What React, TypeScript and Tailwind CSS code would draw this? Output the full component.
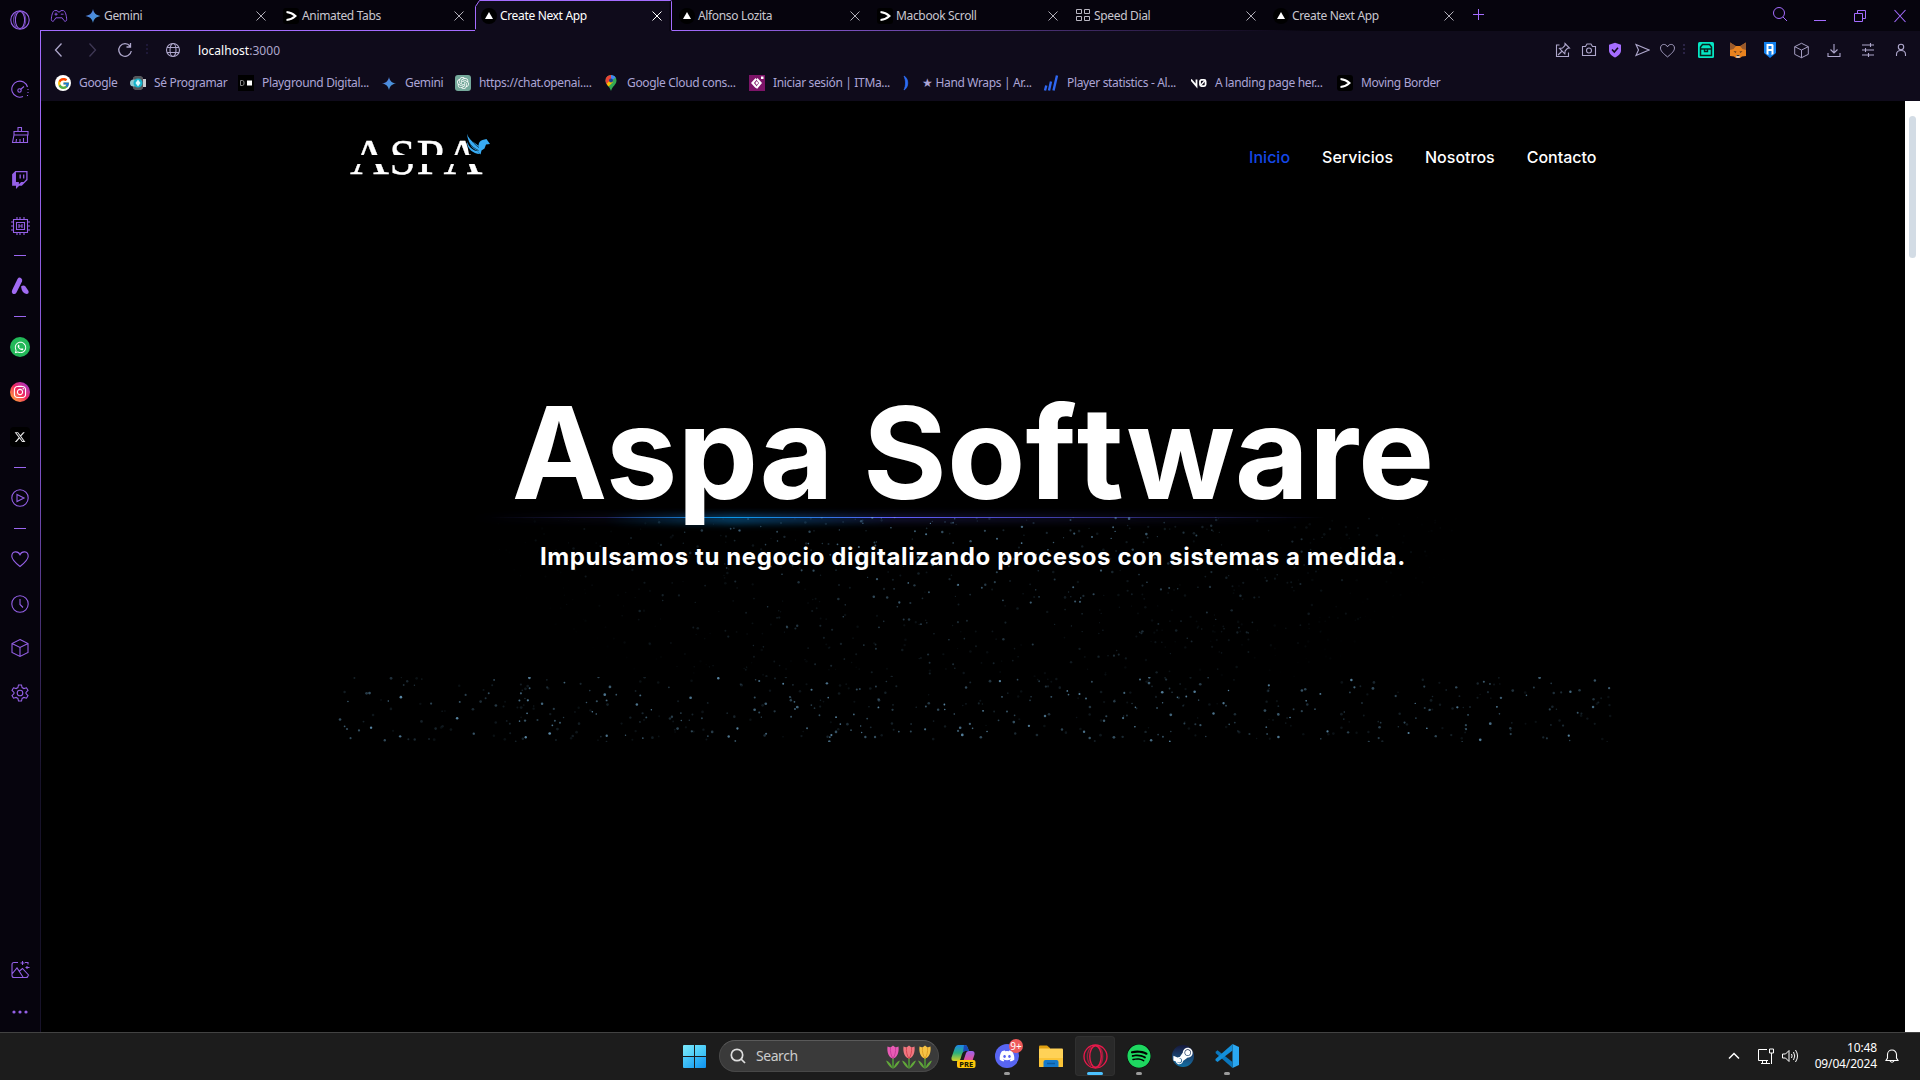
import type { ReactNode } from 'react';
import { FaWhatsapp, FaInstagram, FaXTwitter, FaSpotify, FaSteamSymbol, FaDiscord } from 'react-icons/fa6';
import { BsTwitch } from 'react-icons/bs';
import { SiOpenai } from 'react-icons/si';
import { FcGoogle } from 'react-icons/fc';

type IconProps = { className?: string };

/* ---------- shared helpers ---------- */

function Line({ children, className = '', box = 20 }: { children: ReactNode; className?: string; box?: number }) {
  return (
    <svg viewBox={`0 0 ${box} ${box}`} fill="none" stroke="currentColor" strokeWidth="1.1" className={className}>
      {children}
    </svg>
  );
}

function OperaRing({ className = '' }: IconProps) {
  return (
    <Line className={className}>
      <circle cx="10" cy="10" r="9.2" />
      <ellipse cx="10" cy="10" rx="4.6" ry="8.6" />
      <path d="M12 1.500c5 3.500 5 13.500 0 17M6.500 2.500c-4 4-4 11 0 15" strokeOpacity=".6" />
    </Line>
  );
}

function Cube({ className = '' }: IconProps) {
  return (
    <Line className={className}>
      <path d="M10 1.500l8 4v9l-8 4-8-4v-9zM2 5.500l8 4 8-4M10 9.500v9" />
    </Line>
  );
}

function Heart({ className = '' }: IconProps) {
  return (
    <Line className={className}>
      <path d="M10 17.500C5 13.500 1.800 10.600 1.800 7.200c0-5.400 6.400-5.600 8.200-1.500 1.800-4.100 8.200-3.900 8.200 1.500 0 3.400-3.200 6.300-8.200 10.300z" />
    </Line>
  );
}

function Cross({ className = '' }: IconProps) {
  return (
    <svg viewBox="0 0 10 10" fill="none" stroke="currentColor" className={className}>
      <path d="M0.500 0.500l9 9M9.500 0.500l-9 9" />
    </svg>
  );
}

/* ---------- favicons ---------- */

function Spark({ className = '' }: IconProps) {
  return (
    <svg viewBox="0 0 16 16" className={className}>
      <defs>
        <linearGradient id="spark" x1="0" y1="0" x2="1" y2="1">
          <stop offset="0" stopColor="#5b6fd0" />
          <stop offset=".5" stopColor="#4a90e0" />
          <stop offset="1" stopColor="#4a8fc0" />
        </linearGradient>
      </defs>
      <path d="M8 1c.9 4.200 2.800 6.100 7.500 7-4.700.9-6.600 2.800-7.500 7-.9-4.200-2.800-6.100-7.500-7 4.700-.9 6.600-2.800 7.500-7z" fill="url(#spark)" />
    </svg>
  );
}

function Chevron({ className = '' }: IconProps) {
  return (
    <svg viewBox="0 0 16 16" className={className}>
      <rect width="16" height="16" rx="3" fill="#000" />
      <path d="M3.500 4c3.500.3 6.500 1.700 9 4-2.500 2.300-5.500 3.700-9 4" fill="none" stroke="#fff" strokeWidth="2" />
    </svg>
  );
}

function Triangle({ className = '' }: IconProps) {
  return (
    <svg viewBox="0 0 16 16" className={className}>
      <circle cx="8" cy="8" r="8" fill="#000" />
      <path d="M8 4l4 7H4z" fill="#fff" />
    </svg>
  );
}

function Dial({ className = '' }: IconProps) {
  return (
    <svg viewBox="0 0 16 16" fill="none" stroke="#b9b7c2" className={className}>
      <path d="M1.500 1.500h5v4h-5zM9.500 1.500h5v4h-5zM1.500 8.500h5v4h-5zM9.500 8.500h5v4h-5z" />
    </svg>
  );
}

/* ---------- tab strip ---------- */

const TABS: { title: string; Icon: (p: IconProps) => ReactNode; active?: boolean }[] = [
  { title: 'Gemini', Icon: Spark },
  { title: 'Animated Tabs', Icon: Chevron },
  { title: 'Create Next App', Icon: Triangle, active: true },
  { title: 'Alfonso Lozita', Icon: Triangle },
  { title: 'Macbook Scroll', Icon: Chevron },
  { title: 'Speed Dial', Icon: Dial },
  { title: 'Create Next App', Icon: Triangle },
];

function TabStrip() {
  return (
    <div className="relative flex h-[31px] items-center bg-[#06040d]">
      <div className="absolute bottom-0 left-0 h-px w-[435px] bg-[#a46cff]" />
      <div className="absolute bottom-0 left-[632px] h-px w-[640px] bg-linear-to-r from-[#a46cff] to-transparent" />
      <div className="flex w-[39px] justify-center">
        <Line className="mr-px h-[18px] w-[18px] text-[#8b56e0]">
          <path d="M5 4h3l1 1.500h2L12 4h3c2 .5 3.500 6 3.500 10 0 2-2 2.500-3 1l-2-3h-7l-2 3c-1 1.500-3 1-3-1C1.500 10 3 4.500 5 4zM5 8h3.500M6.700 6.300v3.400M12 8h3" />
        </Line>
      </div>
      {TABS.map(({ title, Icon, active }, i) => (
        <div key={i} className="relative flex h-full w-[198px] shrink-0 items-center pl-[6px]">
          {active && (
            <svg viewBox="0 0 198 31" className="absolute inset-0 h-full w-full">
              <path d="M-2 31V30.500Q-0.500 30.500 -0.500 29V6.500L4.500 0.500H193.500Q194.500 0.500 194.500 1.500V31z" fill="#0f0b1b" />
              <path d="M-3 30.500H-1.500L0.500 29V6.500L4.500 0.500H195.500Q196.500 0.500 196.500 1.500V30.500" fill="none" stroke="#a46cff" />
            </svg>
          )}
          <Icon className="relative h-4 w-4 shrink-0" />
          <span
            className={`relative ml-[3px] w-[150px] text-[12px] leading-4 tracking-[-0.34px] ${active ? 'text-white' : 'text-[#c9c7cf]'}`}
          >
            {title}
          </span>
          <Cross className={`relative ml-[1.5px] h-[10px] w-[10px] ${active ? 'text-white' : 'text-[#b0aeb8]'}`} />
        </div>
      ))}
      <svg viewBox="0 0 12 12" className="mb-[4px] ml-[7px] h-3 w-3" stroke="#a46cff">
        <path d="M6.500 1v11M1 6.500h11" />
      </svg>
      <div className="ml-auto flex items-center gap-[24px] pr-3 text-[#a46cff]">
        <svg viewBox="0 0 16 16" fill="none" stroke="currentColor" className="-mt-1 h-4 w-4">
          <circle cx="7" cy="7" r="5.500" />
          <path d="M11 11l4 4" />
        </svg>
        <svg viewBox="0 0 16 16" fill="none" stroke="currentColor" className="h-4 w-4">
          <path d="M2 12.500h12" />
        </svg>
        <svg viewBox="0 0 16 16" fill="none" stroke="currentColor" className="h-4 w-4">
          <path d="M2.500 5.500h8v8h-8zM5.500 5V2.500h8v8H11" />
        </svg>
        <svg viewBox="0 0 16 16" fill="none" stroke="currentColor" strokeWidth="1.100" className="h-4 w-4">
          <path d="M2.500 2l11 12M13.500 2l-11 12" />
        </svg>
      </div>
    </div>
  );
}

/* ---------- address bar ---------- */

function Dots() {
  return (
    <svg viewBox="0 0 3 12" className="h-3 w-[3px]" fill="currentColor">
      <path d="M0 0h2v2H0zM0 4h2v2H0zM0 8h2v2H0z" />
    </svg>
  );
}

function AddressBar() {
  return (
    <div className="flex h-[38px] items-center text-[#aea7cc]">
      <Line className="ml-[11px] h-4 w-4" box={16}>
        <path d="M10.500 1.500L4.500 8l6 6.500" strokeWidth="1.300" />
      </Line>
      <Line className="ml-[17px] h-4 w-4 text-[#3f3855]" box={16}>
        <path d="M5.500 1.500l6 6.500-6 6.500" strokeWidth="1.300" />
      </Line>
      <Line className="ml-[17px] h-4 w-4" box={16}>
        <path d="M13 4a6.300 6.300 0 1 0 1.300 5M13.500 1v4h-4" strokeWidth="1.300" />
      </Line>
      <span className="ml-[13px] w-[3px] text-[#1e1838]">
        <Dots />
      </span>
      <Line className="ml-[16px] h-4 w-4" box={16}>
        <circle cx="8" cy="8" r="6.500" />
        <ellipse cx="8" cy="8" rx="3" ry="6.500" />
        <path d="M2 5.500h12M2 10.500h12" />
      </Line>
      <span className="mt-px ml-[17px] text-[12px] tracking-[0.05px]">
        <span className="text-white">localhost</span>:3000
      </span>
      <div className="ml-auto flex items-center">
        <Line className="h-4 w-4" box={16}>
          <path d="M4.500 3H1.500v11.500h12V10.500" />
          <path d="M10 1.500l4.500 4.500-2 .3-2.300 2.500-.4 3L4.500 6.500l3-.4L10 3.500zM7.200 9L3 13" />
        </Line>
        <Line className="ml-[10px] h-4 w-4" box={16}>
          <path d="M1.500 4.500h3l1.500-2.500h4l1.500 2.500h3v9h-13z" />
          <circle cx="8" cy="8.500" r="2.500" />
        </Line>
        <svg viewBox="0 0 16 16" className="ml-[10px] h-4 w-4">
          <path d="M8 .8l6 2v5.700c0 3.500-3 5.500-6 7-3-1.500-6-3.500-6-7V2.800z" fill="#a56dff" />
          <path d="M5 7.500L7.300 10 11 5.800" fill="none" stroke="#0f0b1b" strokeWidth="1.600" />
        </svg>
        <Line className="ml-[11px] h-4 w-4" box={16}>
          <path d="M2 2.500L15 8 2 13.500 4.500 8z" />
        </Line>
        <Heart className="ml-[9px] h-[17px] w-[17px]" />
        <span className="ml-[7px] w-[3px] text-[#2a2345]">
          <Dots />
        </span>
        <svg viewBox="0 0 16 16" className="ml-[12px] h-4 w-4">
          <rect width="16" height="16" rx="1.500" fill="#05e6c4" />
          <path d="M2.500 13.500V5l2-2.500h7l2 2.500v8.500z" fill="#05e6c4" stroke="#08231f" strokeWidth="1.500" />
          <path d="M2.500 7h11M6.500 7v2.500h3V7" fill="none" stroke="#08231f" strokeWidth="1.400" />
        </svg>
        <svg viewBox="0 0 16 16" className="ml-[16px] h-4 w-4">
          <path d="M0 .5l5.500 3.500h5L16 .5V14l-4 .5-2 1.500H6l-2-1.500-4-.5z" fill="#e8821e" />
          <path d="M0 .5L6 4 3.500 7 0 8zM16 .5L10 4l2.500 3 3.500 1z" fill="#9a5a2c" />
          <path d="M3.500 9l3 .5-1 1.500zM12.500 9l-3 .5 1 1.500z" fill="#5d3a20" />
          <path d="M6 13h4l-.5 3h-3z" fill="#d9c7b4" />
          <path d="M6.500 13h3v1h-3z" fill="#333" />
        </svg>
        <svg viewBox="0 0 16 16" className="ml-[16px] h-4 w-4">
          <path d="M2 0h12v11l-6 5-6-5z" fill="#1180ee" />
          <path d="M4.500 2h6l1 1v9l-2 1V9h-3v4l-2-1z" fill="#fff" />
          <path d="M6.500 4h3v3h-3z" fill="#1180ee" />
        </svg>
        <Cube className="ml-[15px] h-[17px] w-[17px]" />
        <Line className="ml-[16px] h-4 w-4" box={16}>
          <path d="M8 2v8.500M4.500 7.500L8 11l3.500-3.500M2 11v3.500h12V11" />
        </Line>
        <Line className="ml-[18px] h-4 w-4" box={16}>
          <path d="M2 3h12M2 8h12M2 13h12M10.500 1v4M5.500 6v4M8.500 11v4" />
        </Line>
        <Line className="mr-[11px] ml-[17px] h-4 w-4" box={16}>
          <circle cx="8" cy="5" r="2.700" />
          <path d="M3.500 14v-1.500C3.500 10 5.500 8.500 8 8.500s4.500 1.500 4.500 4V14" />
        </Line>
      </div>
    </div>
  );
}

/* ---------- bookmarks ---------- */

const BOOKMARKS: { label: string; width: string; icon: ReactNode }[] = [
  {
    label: 'Google',
    width: 'w-[75px]',
    icon: (
      <span className="flex h-4 w-4 items-center justify-center rounded-full bg-white">
        <FcGoogle className="h-[13px] w-[13px]" />
      </span>
    ),
  },
  {
    label: 'Sé Programar',
    width: 'w-[108px]',
    icon: (
      <svg viewBox="0 0 16 16" className="h-4 w-4">
        <path d="M3 2.500l2-1.500h6l2 1.500v11L11 15H5l-2-1.500z" fill="#55585c" />
        <path d="M13 4l3 0v8h-3z" fill="#c9cdd0" />
        <circle cx="3.500" cy="8" r="3.500" fill="#8fc9cf" />
        <path d="M8 3.500a4.500 4.500 0 1 1 0 9 4.500 4.500 0 1 1 0-9z" fill="#16b4cc" />
        <path d="M8 4.500L5.500 8 8 11.500 10.500 8z" fill="#d8fbff" />
      </svg>
    ),
  },
  {
    label: 'Playground Digital...',
    width: 'w-[143px]',
    icon: (
      <svg viewBox="0 0 16 16" className="h-4 w-4">
        <rect width="16" height="16" fill="#000" />
        <path d="M2.500 5.500h2l1.500 1v3l-1.500 1h-2z" fill="none" stroke="#888" />
        <rect x="9" y="5.500" width="5" height="5" fill="#fff" />
      </svg>
    ),
  },
  { label: 'Gemini', width: 'w-[74px]', icon: <Spark className="h-[15px] w-4" /> },
  {
    label: 'https://chat.openai....',
    width: 'w-[148px]',
    icon: (
      <span className="flex h-4 w-4 items-center justify-center rounded-[3px] bg-[#75a99b] text-white">
        <SiOpenai className="h-3 w-3" />
      </span>
    ),
  },
  {
    label: 'Google Cloud cons...',
    width: 'w-[146px]',
    icon: (
      <svg viewBox="0 0 16 16" className="h-4 w-4">
        <defs>
          <clipPath id="pin">
            <path d="M8 0a5.500 5.500 0 0 1 5.500 5.500C13.500 9.500 9.500 11 8 16 6.500 11 2.500 9.500 2.500 5.500A5.500 5.500 0 0 1 8 0z" />
          </clipPath>
        </defs>
        <g clipPath="url(#pin)">
          <path d="M0 0h16v16H0z" fill="#34a853" />
          <path d="M0 0h8L8 6 2 11H0z" fill="#ea4335" />
          <path d="M8 0h8L8 6z" fill="#4285f4" />
          <path d="M1 12L8 4l2 3-6 6z" fill="#fbbc04" />
        </g>
        <circle cx="8" cy="5.500" r="2" fill="#1a3f8f" />
      </svg>
    ),
  },
  {
    label: 'Iniciar sesión | ITMa...',
    width: 'w-[149px]',
    icon: (
      <svg viewBox="0 0 16 16" className="h-4 w-4">
        <rect width="16" height="16" fill="#7d1468" />
        <path d="M6.500 3L2 8l4.500 5 1.300-1.500L5 8l2.800-3.500z" fill="#fff" />
        <path d="M8.500 3L13 8l-5 6-1.300-1.700L10 8 7.200 4.500z" fill="#fff" />
        <path d="M6.200 8L7.800 6l1.600 2-1.600 2zM12 1.500h2.500V4H12z" fill="#fff" />
      </svg>
    ),
  },
  {
    label: '★ Hand Wraps | Ar...',
    width: 'w-[145px]',
    icon: (
      <svg viewBox="0 0 16 16" className="h-4 w-4">
        <path d="M6 1c5 2.500 5 11.500 0 14 2-4.500 2-9.500 0-14z" fill="#2d6df6" stroke="#2d6df6" strokeWidth=".7" />
      </svg>
    ),
  },
  {
    label: 'Player statistics - Al...',
    width: 'w-[148px]',
    icon: (
      <svg viewBox="0 0 16 16" className="h-4 w-4" stroke="#2f67f0" strokeWidth="2.400">
        <path d="M2 15.500l1.300-5M6 15.500L8 6.500M10.500 15.500L14 .5" />
      </svg>
    ),
  },
  {
    label: 'A landing page her...',
    width: 'w-[146px]',
    icon: (
      <svg viewBox="0 0 16 16" className="h-4 w-4" fill="none" stroke="#fff" strokeWidth="1.800">
        <path d="M0 4.500L5.500 11V4.500" />
        <rect x="9" y="4.900" width="5.600" height="6.200" rx="1.500" />
        <path d="M9.500 10.500l4.500-5" strokeWidth="1.200" />
      </svg>
    ),
  },
  { label: 'Moving Border', width: 'w-[120px]', icon: <Chevron className="h-4 w-4" /> },
];

function Bookmarks() {
  return (
    <div className="flex h-[32px] items-center pb-[4px] pl-[15px]">
      {BOOKMARKS.map((b) => (
        <div key={b.label} className={`flex shrink-0 items-center gap-2 ${b.width}`}>
          <span className="flex h-4 w-4 shrink-0 items-center">{b.icon}</span>
          <span className="whitespace-nowrap text-[12px] leading-4 tracking-[-0.34px] text-[#aca5d6]">{b.label}</span>
        </div>
      ))}
    </div>
  );
}

/* ---------- side bar ---------- */

function Divider({ className = '' }: IconProps) {
  return (
    <div className={`flex h-[2px] w-3 shrink-0 items-start ${className}`}>
      <div className="h-px w-full bg-[#9a66f0]" />
    </div>
  );
}

function Sidebar() {
  return (
    <aside className="flex w-10 shrink-0 flex-col items-center bg-[#06040d] pt-[10px] pb-[10px] text-[#9460e6]">
      <OperaRing className="h-5 w-5 shrink-0" />
      <Line className="mt-[50px] h-5 w-5 shrink-0">
        <path d="M13 16.500A8 8 0 1 1 17.500 7M18 9v1M18 12v1M17.500 15v1M10.500 9.500L14 6.500" />
        <circle cx="9.500" cy="10.500" r="1.700" />
      </Line>
      <Line className="mt-[25px] h-5 w-5 shrink-0">
        <path d="M8 6V2.500h3.500V6M4 6.500h14v3.500H4zM4 10l-1.500 7.500h15V10M6.500 14l-.5 3.500M10 14v3.500M13.500 13v4.500" />
      </Line>
      <BsTwitch className="mt-[26px] h-[18px] w-5 shrink-0" />
      <Line className="mt-[27px] h-5 w-5 shrink-0">
        <path d="M3.500 3.500h14v13h-14zM6.500 6.500h8v7h-8z" />
        <path d="M9 8v4M12 8v4M9 10h3M7 1v2M10 1v2M14 1v2M7 17v2M10 17v2M14 17v2M1 6h2M1 10h2M1 14h2M18 6h2M18 10h2M18 14h2" />
      </Line>
      <Divider className="mt-[19px]" />
      <svg viewBox="0 0 20 20" fill="#a06bf2" className="mt-[19px] h-5 w-5 shrink-0">
        <path d="M7.500 3Q9 .7 11.200 2.200 12.800 3.500 12 5.500L6.500 16.500Q5 19 2.500 17.500 1.200 16.200 2.200 14z" />
        <path d="M11 10.500Q13.500 8.500 15.500 10.500L18.500 15q.7 3-2 3Q12 17.500 11 10.500z" />
      </svg>
      <Divider className="mt-[20px]" />
      <span className="mt-[19px] flex h-5 w-5 shrink-0 items-center justify-center rounded-full bg-[#22b858] text-white">
        <FaWhatsapp className="h-[13px] w-[13px]" />
      </span>
      <span className="mt-[25px] flex h-5 w-5 shrink-0 items-center justify-center rounded-full bg-linear-to-tr from-[#ffb400] via-[#f0205c] to-[#9a15d8] text-white">
        <FaInstagram className="h-[14px] w-[14px]" />
      </span>
      <span className="mt-[25px] flex h-5 w-5 shrink-0 items-center justify-center rounded bg-black text-[#e8e8e8]">
        <FaXTwitter className="h-3 w-3" />
      </span>
      <Divider className="mt-[20px]" />
      <Line className="mt-[19px] h-5 w-5 shrink-0">
        <circle cx="10" cy="10" r="8.200" />
        <path d="M7 6.500l7 3.500-7 3.500z" />
      </Line>
      <Divider className="mt-[20px]" />
      <Heart className="mt-[19px] h-5 w-5 shrink-0" />
      <Line className="mt-[25px] h-5 w-5 shrink-0">
        <circle cx="10" cy="10" r="8.200" />
        <path d="M10 5v5.500l3 3" />
      </Line>
      <Cube className="mt-[24px] h-5 w-5 shrink-0" />
      <Line className="mt-[25px] h-5 w-5 shrink-0">
        <circle cx="10" cy="10" r="2.800" />
        <path d="M8.500 2h3l.6 2.600 1.800 1 2.600-.8L18 7.500 16 9.400v1.200l2 1.900-1.500 2.700-2.600-.8-1.800 1-.6 2.600h-3l-.6-2.600-1.800-1-2.600.8L2 12.500l2-1.900V9.400L2 7.500l1.500-2.700 2.600.8 1.800-1z" />
      </Line>
      <Line className="mt-auto h-5 w-5 shrink-0">
        <path d="M8 2.500H4Q2 2.500 2 4.500v11q0 2 2 2h12q2 0 2-2M2 14l5-6 6 9M9.500 11l3-2.500 6.500 7M12.500 1v4M10.500 3h4M15 2.500h3v2M17 6v3M15.500 7.500h4" />
      </Line>
      <svg viewBox="0 0 20 20" fill="currentColor" className="mt-[22px] h-5 w-5 shrink-0">
        <circle cx="4" cy="10" r="1.600" />
        <circle cx="10" cy="10" r="1.600" />
        <circle cx="16" cy="10" r="1.600" />
      </svg>
    </aside>
  );
}

/* ---------- page ---------- */

function rng(seed: number) {
  let s = seed;
  return () => {
    s = (s * 1664525 + 1013904223) % 4294967296;
    return s / 4294967296;
  };
}

type Dot = { x: number; y: number; r: number; o: number };

function haloDots(): Dot[] {
  const rand = rng(71);
  return Array.from({ length: 900 }, () => {
    const x = rand() * 1000 + 140;
    const y = rand() * 160;
    const d = Math.sqrt(((x - 640) / 490) ** 2 + (y / 220) ** 2);
    return { x, y, r: 0.6 + rand() * 0.7, o: Math.max(0, 1 - d) * (0.15 + rand() ** 2 * 0.7) };
  });
}

function bandDots(): Dot[] {
  const rand = rng(19);
  return Array.from({ length: 560 }, () => ({
    x: rand() * 1280,
    y: rand() * 65,
    r: 0.7 + rand() * 0.7,
    o: 0.08 + rand() ** 2 * 0.65,
  }));
}

function Sparkles({ dots, height, className }: { dots: Dot[]; height: number; className: string }) {
  return (
    <svg viewBox={`0 0 1280 ${height}`} fill="#7fc0ea" className={className}>
      {dots.map((d, i) => (
        <circle key={i} cx={d.x} cy={d.y} r={d.r} opacity={d.o} />
      ))}
    </svg>
  );
}

const HALO = haloDots();
const BAND = bandDots();

function Logo() {
  return (
    <svg viewBox="0 0 144 48" className="h-12 w-36 overflow-visible">
      <g fill="#fff" stroke="#fff" strokeWidth=".3" fontFamily="'Liberation Serif', serif" fontSize="50">
        <text x="0" y="40.500" textLength="39" lengthAdjust="spacingAndGlyphs">A</text>
        <text x="39.500" y="40.500" textLength="26" lengthAdjust="spacingAndGlyphs">S</text>
        <text x="66.500" y="40.500">P</text>
        <text x="93.500" y="40.500" textLength="39" lengthAdjust="spacingAndGlyphs">A</text>
      </g>
      <rect x="-1" y="22" width="145" height="9" fill="#000" />
      <path d="M115 0l19 3v18.500h-15z" fill="#000" />
      <g fill="#38acf5">
        <path d="M117 .8c1 4 4 7 8.500 9.700l3 2.300c0-3 1.500-5 4-5.800l4-1 1 1.500 2.500 3.500-4 .5-1.500 4-3 2-1 4-3.500-4c-5-1.500-9-7.500-10-16.700z" />
        <path d="M117 8.500c2 6 6 9 10.500 9.500l2.500 3c-7-.5-13-5-13-12.500z" />
      </g>
      <path d="M117.500 6c2 6 6 9 11 11.500M120 4.500c2 4.500 5.500 7.500 9 10" fill="none" stroke="#000" strokeWidth=".6" />
    </svg>
  );
}

function Page() {
  return (
    <main className="flex min-w-0 flex-1 flex-col items-center overflow-hidden bg-black font-[Inter,sans-serif]">
      <header className="flex h-[112px] w-full max-w-[1247px] shrink-0 items-center justify-between">
        <Logo />
        <nav className="flex gap-8 text-base font-medium text-white">
          <a className="text-blue-700">Inicio</a>
          <a>Servicios</a>
          <a>Nosotros</a>
          <a>Contacto</a>
        </nav>
      </header>
      <section className="mt-[176px] flex flex-col items-center text-white">
        <h1 className="relative z-10 h-32 text-9xl leading-none font-bold [word-spacing:-1px]">
          Aspa So<span className="tracking-[0.5px]">f</span>tware
        </h1>
        <div className="relative h-[160px] w-[1280px]">
          <div className="absolute top-0 left-20 h-[2px] w-3/4 bg-linear-to-r from-transparent from-5% via-indigo-500 to-transparent to-95% opacity-80 blur-[4px]" />
          <div className="absolute top-0 left-20 h-px w-3/4 bg-linear-to-r from-transparent from-8% via-indigo-500 to-transparent to-95%" />
          <div className="absolute top-0 left-60 h-[5px] w-1/4 bg-linear-to-r from-transparent from-10% via-sky-500 to-transparent opacity-65 blur-[4px]" />
          <div className="absolute top-0 left-60 h-px w-1/4 bg-linear-to-r from-transparent from-10% via-sky-500 to-transparent opacity-80" />
          <Sparkles dots={HALO} height={160} className="absolute inset-0 h-[160px] w-[1280px]" />
          <p className="relative pt-[24px] text-center text-2xl font-bold tracking-[0.61px]">
            Impulsamos tu negocio digitalizando procesos con sistemas a medida.
          </p>
        </div>
        <Sparkles dots={BAND} height={65} className="h-[65px] w-[1280px]" />
      </section>
    </main>
  );
}

/* ---------- task bar ---------- */

function Tulip({ petal, shade }: { petal: string; shade: string }) {
  return (
    <svg viewBox="0 0 16 24" className="h-6 w-4">
      <path d="M8 12v11.500" stroke="#4f9a35" strokeWidth="1.600" />
      <path d="M7.500 23.500C4 21.500 2.500 19 1 15.500c3 1 5.500 3.500 6.500 8zM8.500 23.500c3.500-2 5-4.500 6.500-8-3 1-5.500 3.500-6.500 8z" fill="#62a83a" />
      <path d="M2.500 1.500L5.500 2.500 8 .5l2.500 2 3-1c.8 6-1.500 11.500-5.500 12C4 13 1.700 7.500 2.500 1.500z" fill={petal} />
      <path d="M5.500 2.500c-.5 4 .5 8 2.500 11 2-3 3-7 2.500-11" fill="none" stroke={shade} strokeWidth=".9" />
    </svg>
  );
}

function TaskApp({ children, dot, active }: { children: ReactNode; dot?: boolean; active?: boolean }) {
  return (
    <div
      className={`relative mx-[2px] flex h-10 w-10 shrink-0 items-center justify-center rounded ${active ? 'bg-[#292929] ring-1 ring-[#303030] ring-inset' : ''}`}
    >
      {children}
      {dot && <span className="absolute bottom-[1px] h-[3px] w-[6px] rounded-full bg-[#9a9a9a]" />}
      {active && <span className="absolute bottom-[1px] h-[3px] w-4 rounded-full bg-[#4cc2ff]" />}
    </div>
  );
}

function Taskbar() {
  return (
    <footer className="relative flex h-12 shrink-0 items-center border-t border-[#424242] bg-[#1c1c1c] pb-px">
      <div className="ml-[683px] grid h-[23px] w-[23px] grid-cols-2 gap-px">
        <span className="rounded-tl-[1px] bg-linear-to-br from-[#7ae8fb] to-[#4ccdf8]" />
        <span className="rounded-tr-[1px] bg-linear-to-br from-[#63dcfa] to-[#35bdf6]" />
        <span className="rounded-bl-[1px] bg-linear-to-br from-[#4fcdf9] to-[#1fa6f3]" />
        <span className="rounded-br-[1px] bg-linear-to-br from-[#36bbf7] to-[#0e92ef]" />
      </div>
      <div className="ml-[13px] flex h-8 w-[220px] items-center rounded-full border border-[#484848] border-t-[#5a5a5a] bg-[#3a3a3a] pl-[10px]">
        <svg viewBox="0 0 16 16" fill="none" stroke="#dedede" strokeWidth="1.700" className="h-4 w-4">
          <circle cx="7" cy="7" r="5.700" />
          <path d="M11 11l4 4" />
        </svg>
        <span className="ml-[10px] text-[14px] leading-5 tracking-[-0.45px] text-[#cccccc]">Search</span>
        <span className="mt-px mr-[5px] ml-auto flex">
          <Tulip petal="#e85bb5" shade="#c43a98" />
          <Tulip petal="#ef7880" shade="#d4404f" />
          <Tulip petal="#f6c244" shade="#dd9a20" />
        </span>
      </div>
      <div className="ml-[2px] flex">
        <TaskApp>
          <svg viewBox="0 0 26 26" className="h-[26px] w-[26px]">
            <defs>
              <linearGradient id="cpl" x1="0" y1="0" x2="0" y2="1">
                <stop offset="0" stopColor="#1d86e8" />
                <stop offset=".5" stopColor="#2bb07c" />
                <stop offset="1" stopColor="#d8d423" />
              </linearGradient>
              <linearGradient id="cpr" x1="0" y1="0" x2="0" y2="1">
                <stop offset="0" stopColor="#9a63f0" />
                <stop offset=".6" stopColor="#e0529b" />
                <stop offset="1" stopColor="#f58a4a" />
              </linearGradient>
            </defs>
            <path d="M8 2h7q2 0 2.500 2L19 8h-4q-2 0-3 3l-1.500 5q-.5 2-3 2H4q-3 0-2.500-3.500L5 4.500Q6 2 8 2z" fill="url(#cpl)" />
            <path d="M14 2q3 0 3.500 2L19 8h-4l-2 1z" fill="#1748b8" />
            <path d="M19 8h3q3 0 2.500 3.500L22 19q-1 3-3 3h-7l4-12q.5-2 3-2z" fill="url(#cpr)" />
            <rect x="7" y="17" width="18.500" height="8" rx="2" fill="#ffc60a" />
            <text x="16.200" y="23.700" textAnchor="middle" fontFamily="'Noto Sans', sans-serif" fontSize="7.500" fontWeight="800" fill="#201a00">
              PRE
            </text>
          </svg>
        </TaskApp>
        <TaskApp dot>
          <span className="flex h-6 w-6 items-center justify-center rounded-full bg-[#5865f2] text-white">
            <FaDiscord className="h-4 w-4" />
          </span>
          <span className="absolute top-[3px] right-[4px] flex h-[14px] w-[14px] items-center justify-center rounded-full bg-[#ee5a5a] text-[10px] leading-none text-white">
            9+
          </span>
        </TaskApp>
        <TaskApp>
          <svg viewBox="0 0 24 24" className="h-6 w-6">
            <path d="M0 2.500Q0 1.500 1 1.500h7L11 4v6H0z" fill="#e0a010" />
            <path d="M1 4.500h22q1 0 1 1V22q0 1-1 1H1q-1 0-1-1V5.500q0-1 1-1z" fill="#ffd257" />
            <path d="M0 14h24v8q0 1-1 1H1q-1 0-1-1z" fill="#fbc437" />
            <path d="M4.500 23v-5q0-2 2-2h11q2 0 2 2v5z" fill="#1479cb" />
            <path d="M8 19.500h8" stroke="#0c5ba0" strokeWidth="1.500" />
          </svg>
        </TaskApp>
        <TaskApp active>
          <OperaRing className="h-[25px] w-[25px] text-[#e8194b]" />
        </TaskApp>
        <TaskApp dot>
          <span className="flex h-6 w-6 items-center justify-center rounded-full bg-black text-[#1ed760]">
            <FaSpotify className="h-6 w-6" />
          </span>
        </TaskApp>
        <TaskApp>
          <span className="mr-px flex h-[22px] w-[22px] items-center justify-center rounded-full bg-linear-to-b from-[#14183c] to-[#0d70a5] text-white">
            <FaSteamSymbol className="h-[22px] w-[22px]" />
          </span>
        </TaskApp>
        <TaskApp dot>
          <svg viewBox="0 0 24 24" className="h-6 w-6">
            <path d="M17.500 0L24 3v18l-6.500 3z" fill="#2aa7f1" />
            <path d="M1 7.500l1.500-1.200L17.500 18v6L.5 9z" fill="#0a77bd" />
            <path d="M17.500 0v6.500L2.500 18 .5 16.500V15z" fill="#138fda" />
          </svg>
        </TaskApp>
      </div>
      <div className="ml-auto flex items-center text-white">
        <svg viewBox="0 0 12 12" fill="none" stroke="currentColor" strokeWidth="1.500" className="h-3 w-3">
          <path d="M1 8.500l5-5 5 5" />
        </svg>
        <svg viewBox="0 0 18 18" fill="none" stroke="currentColor" className="ml-[16px] h-[18px] w-[18px]">
          <path d="M11 2.500H2.500v11H12M5 16.500h9M6.500 13.500v3M10.500 13.500v3M13.500 2h4v4h-4zM15.500 6v11" />
        </svg>
        <svg viewBox="0 0 18 18" fill="none" stroke="currentColor" className="ml-[7px] h-[18px] w-[18px]">
          <path d="M1.500 7h3L8 3.500v11L4.500 11h-3zM10.500 7q1.200 2 0 4M12.500 5q2.500 4 0 8M14.500 3q4 6 0 12" />
        </svg>
        <div className="ml-[12px] w-[66px] text-right text-[12px] leading-4 tracking-[-0.15px] whitespace-nowrap">
          <div>10:48</div>
          <div>09/04/2024</div>
        </div>
        <svg viewBox="0 0 16 16" fill="none" stroke="currentColor" strokeWidth="1.100" className="mr-[20px] ml-[7px] h-4 w-4">
          <path d="M3.500 10V6.500a4.500 4.500 0 0 1 9 0V10l1.500 2.500H2zM6 13q2 2.500 4 0" />
        </svg>
      </div>
    </footer>
  );
}

export default function App() {
  return (
    <div className="flex h-[1080px] w-[1920px] flex-col overflow-hidden bg-black font-['Noto_Sans',sans-serif]">
      <div className="flex min-h-0 flex-1">
        <Sidebar />
        <div className="relative flex w-[1880px] flex-col">
          <div className="absolute top-[30px] left-0 z-10 h-[1002px] w-px bg-linear-to-b from-[#a46cff] via-[#7a50c0] via-45% to-[#171229] to-75%" />
          <TabStrip />
          <div className="h-[70px] shrink-0 bg-[#0f0b1b]">
            <AddressBar />
            <Bookmarks />
          </div>
          <div className="flex min-h-0 flex-1">
            <div className="w-px shrink-0" />
            <Page />
            <div className="flex w-[15px] shrink-0 bg-white pt-[15px] pl-[4px]">
              <div className="h-[142px] w-[7px] rounded-full bg-[#d3dce5]" />
            </div>
          </div>
        </div>
      </div>
      <Taskbar />
    </div>
  );
}
